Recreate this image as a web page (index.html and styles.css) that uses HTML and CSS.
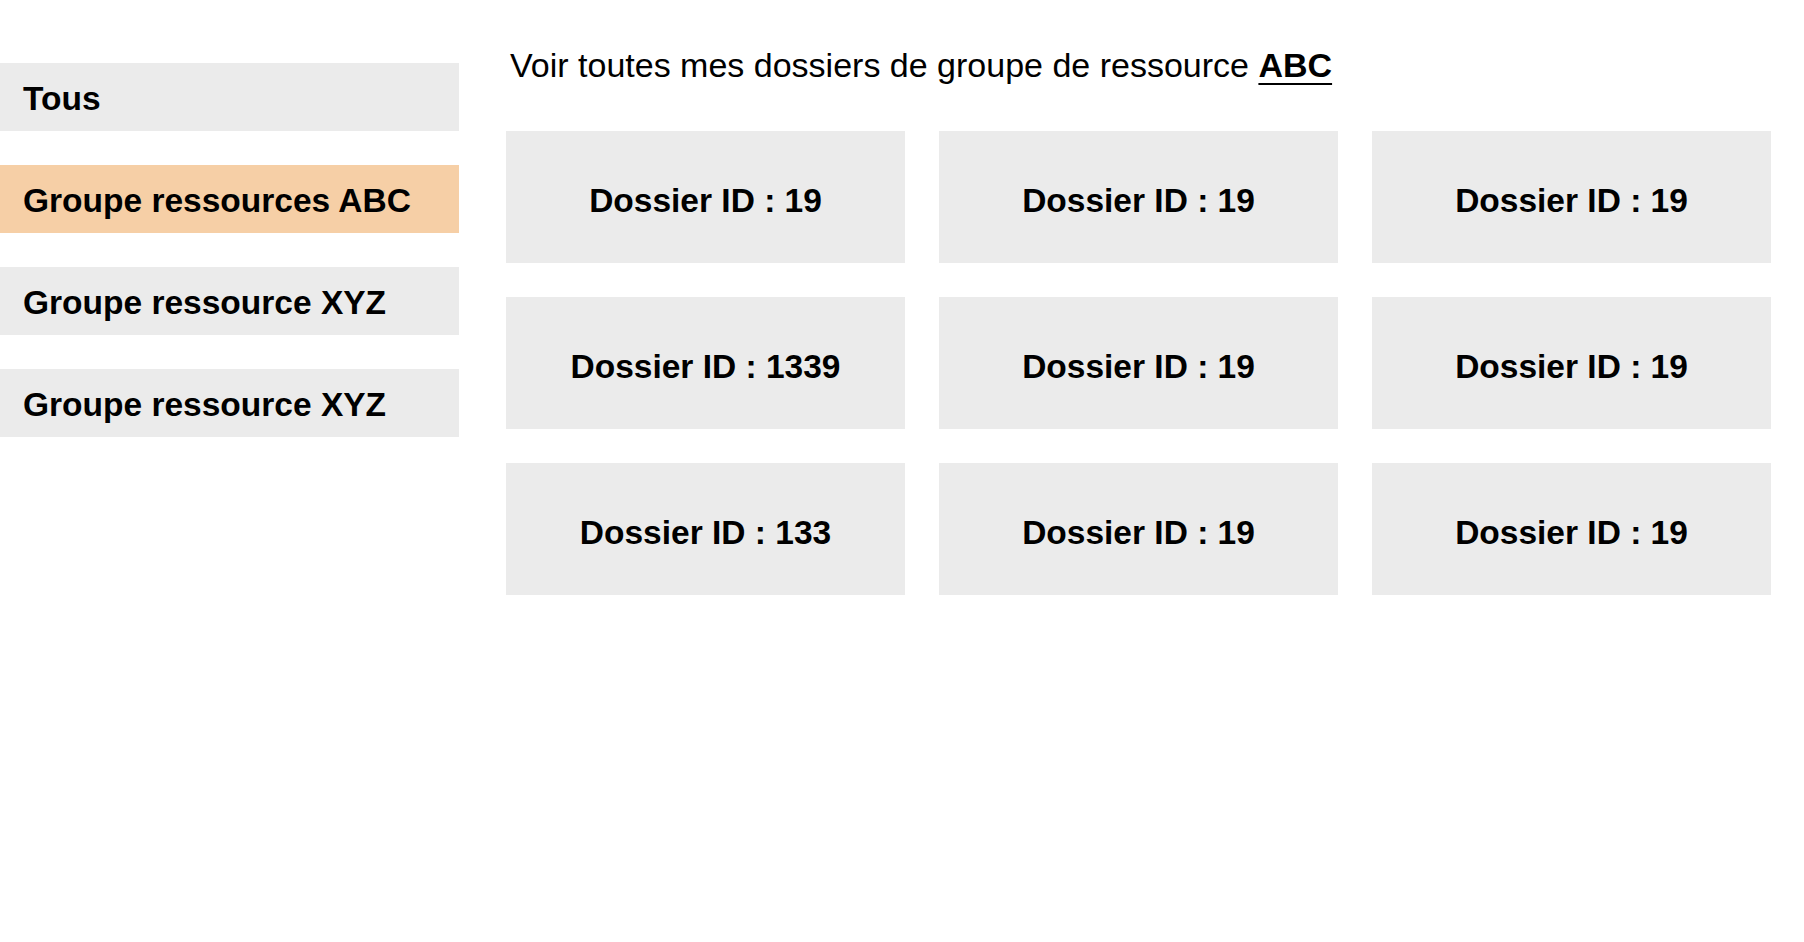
FILE: index.html
```html
<!DOCTYPE html>
<html lang="fr">
<head>
<meta charset="utf-8">
<title>Dossiers</title>
<link rel="stylesheet" href="styles.css">
</head>
<body>
<div class="page">
  <nav class="sidebar">
    <div class="side-item">Tous</div>
    <div class="side-item active">Groupe ressources ABC</div>
    <div class="side-item">Groupe ressource XYZ</div>
    <div class="side-item">Groupe ressource XYZ</div>
  </nav>
  <main class="content">
    <h1 class="title">Voir toutes mes dossiers de groupe de ressource <a class="title-link">ABC</a></h1>
    <div class="grid">
      <div class="card">Dossier ID : 19</div>
      <div class="card">Dossier ID : 19</div>
      <div class="card">Dossier ID : 19</div>
      <div class="card">Dossier ID : 1339</div>
      <div class="card">Dossier ID : 19</div>
      <div class="card">Dossier ID : 19</div>
      <div class="card">Dossier ID : 133</div>
      <div class="card">Dossier ID : 19</div>
      <div class="card">Dossier ID : 19</div>
    </div>
  </main>
</div>
</body>
</html>
```

FILE: styles.css
```css
html, body {
  margin: 0;
  padding: 0;
  background: #ffffff;
}

body {
  font-family: "Liberation Sans", Arial, Helvetica, sans-serif;
  color: #000000;
}

.page {
  display: flex;
  align-items: flex-start;
}

.sidebar {
  width: 459px;
  flex: none;
  margin-top: 63px;
  display: flex;
  flex-direction: column;
  gap: 34px;
}

.side-item {
  height: 68px;
  background: #ebebeb;
  display: flex;
  align-items: center;
  padding-left: 23px;
  padding-top: 4px;
  font-size: 33.5px;
  font-weight: bold;
  box-sizing: border-box;
}

.side-item.active {
  background: #f6cfa6;
}

.content {
  margin-left: 47px;
  padding-top: 46px;
}

.title {
  margin: 0 0 47px 4px;
  font-size: 34px;
  line-height: 38px;
  font-weight: normal;
}

.title-link {
  font-weight: bold;
  color: #000000;
  text-decoration: underline;
  text-decoration-thickness: 2px;
  text-underline-offset: 6px;
}

.grid {
  display: grid;
  grid-template-columns: repeat(3, 399px);
  grid-auto-rows: 132px;
  column-gap: 34px;
  row-gap: 34px;
}

.card {
  background: #ebebeb;
  display: flex;
  align-items: center;
  justify-content: center;
  font-size: 33.5px;
  font-weight: bold;
  padding-top: 8px;
  box-sizing: border-box;
}
```
